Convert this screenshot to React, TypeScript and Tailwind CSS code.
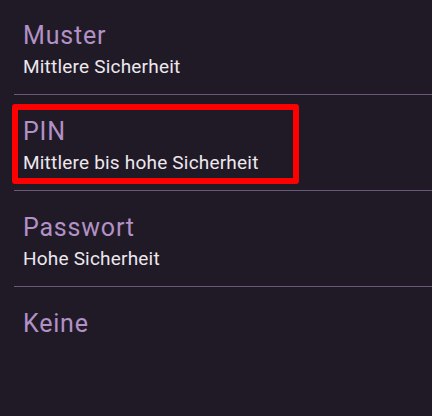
const OPTIONS = [
  { title: 'Muster', sub: 'Mittlere Sicherheit' },
  { title: 'PIN', sub: 'Mittlere bis hohe Sicherheit' },
  { title: 'Passwort', sub: 'Hohe Sicherheit' },
  { title: 'Keine' },
];

export default function App() {
  return (
    <div className="relative w-[432px] h-[416px] overflow-hidden bg-[#201a26] font-['Roboto',sans-serif]">
      <div className="-mt-px">
        {OPTIONS.map((o, i) => (
          <div key={o.title} className="ml-[14px]">
            <div className="h-[95px] pl-[9px] pt-[21px]">
              <div className="text-[25px] leading-[32px] tracking-[0.8px] text-[#b291c6]">{o.title}</div>
              {o.sub && (
                <div className="mt-[2px] text-[19px] leading-[26px] tracking-[0.2px] text-[#ede7ee]">{o.sub}</div>
              )}
            </div>
            {i < OPTIONS.length - 1 && <div className="h-px bg-[#6a5a77]" />}
          </div>
        ))}
      </div>
      {/* highlight box */}
      <div className="absolute left-[12px] top-[104px] w-[287px] h-[80px] border-[6px] border-[#ff0000] rounded-[3px]" />
    </div>
  );
}
